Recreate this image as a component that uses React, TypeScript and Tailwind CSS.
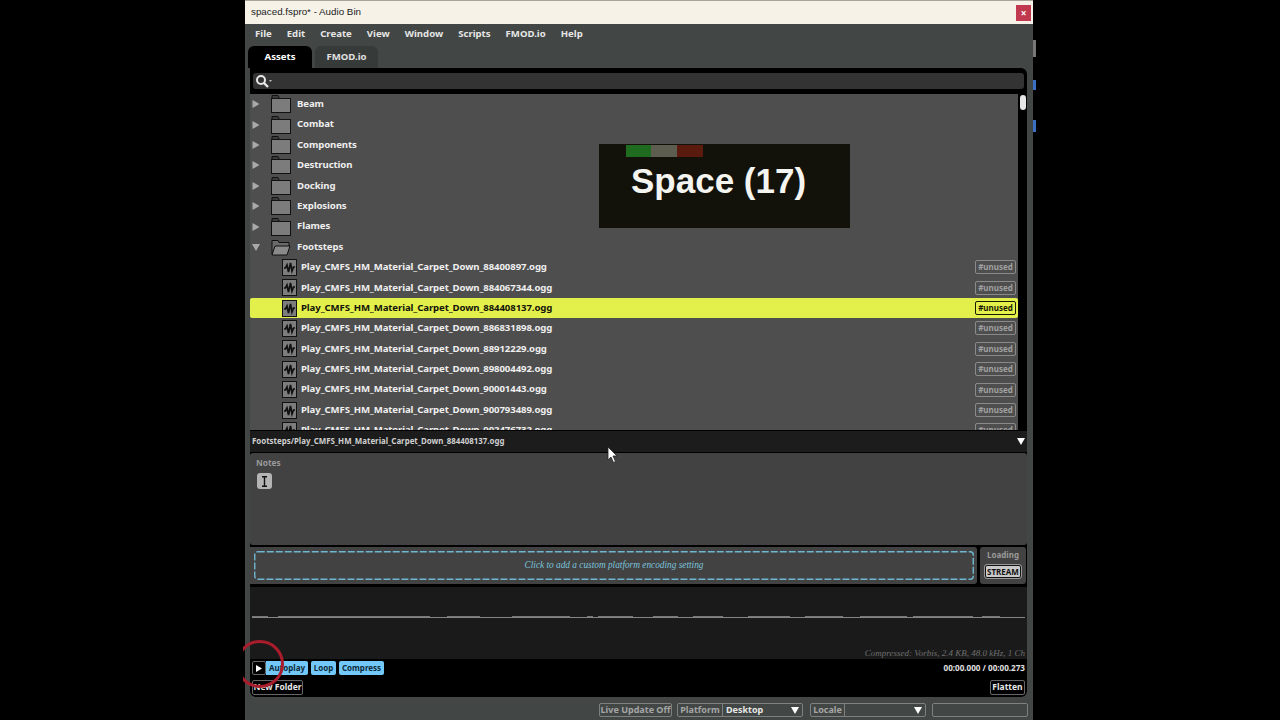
const folders = ["Beam", "Combat", "Components", "Destruction", "Docking", "Explosions", "Flames"]
const files = [
    "Play_CMFS_HM_Material_Carpet_Down_88400897.ogg",
    "Play_CMFS_HM_Material_Carpet_Down_884067344.ogg",
    "Play_CMFS_HM_Material_Carpet_Down_884408137.ogg",
    "Play_CMFS_HM_Material_Carpet_Down_886831898.ogg",
    "Play_CMFS_HM_Material_Carpet_Down_88912229.ogg",
    "Play_CMFS_HM_Material_Carpet_Down_898004492.ogg",
    "Play_CMFS_HM_Material_Carpet_Down_90001443.ogg",
    "Play_CMFS_HM_Material_Carpet_Down_900793489.ogg",
    "Play_CMFS_HM_Material_Carpet_Down_902476732.ogg",
]
const menu = ["File", "Edit", "Create", "View", "Window", "Scripts", "FMOD.io", "Help"]

// louder runs of the flat waveform, x start / x end
const waveRuns = [[2, 18], [28, 180], [197, 207], [207, 230], [262, 320], [337, 343], [348, 383], [403, 428], [443, 473], [498, 540], [555, 593], [610, 657], [663, 723], [732, 750]]

const Triangle = ({ open }: { open?: boolean }) => (
    <svg width="10" height="10" viewBox="0 0 10 10" className="shrink-0">
        {open ? <path d="M1 2h8L5 9z" fill="#a9a9a9" /> : <path d="M1.5 1l7 4-7 4z" fill="#a9a9a9" />}
    </svg>
)

const FolderIcon = ({ open }: { open?: boolean }) => (
    <svg width="20" height="18" viewBox="0 0 20 18" className="shrink-0">
        {open ? (
            <>
                <path d="M1 16V2.5h6l1 2h10v4H5z" fill="#6a6a6a" stroke="#111" strokeWidth="1" />
                <path d="M1 17l3-9h15l-3 9z" fill="#8a8a8a" stroke="#111" strokeWidth="1" />
            </>
        ) : (
            <>
                <path d="M1 3.5V.5h6l1.5 3z" fill="#3c3c3c" stroke="#111" strokeWidth="1" />
                <rect x="0.5" y="3.5" width="19" height="14" fill="#7c7c7c" stroke="#111" strokeWidth="1" />
            </>
        )}
    </svg>
)

const WaveIcon = () => (
    <svg width="15" height="17" viewBox="0 0 15 17" className="shrink-0">
        <rect x="0.5" y="0.5" width="14" height="16" fill="#7d7d7d" stroke="#111" strokeWidth="1" />
        <path d="M2 9h1.5l1.5-3 1.5 7 2-9 1.5 8 1.5-4H13" fill="none" stroke="#111" strokeWidth="1.7" />
    </svg>
)

const Tag = ({ active }: { active?: boolean }) => (
    <div className={`w-[41px] h-[14px] mr-[2px] rounded-[2px] border flex items-center justify-center text-[8px] font-bold tracking-normal ${active ? "border-[#1a1a00] text-[#1a1a00]" : "border-[#8a8a8a] text-[#a0a0a0]"}`}>
        #unused
    </div>
)

const App = () => {
    return (
        <div className="relative w-[1280px] h-[720px] bg-black overflow-hidden font-['Noto_Sans',sans-serif]">
            <div className="ml-[245px] w-[788px] h-[720px] bg-[#424745] flex flex-col">
                {/* Title bar */}
                <div className="h-[24px] shrink-0 bg-[#f6f2e8] border-t border-[#a8a498] flex items-center justify-between pl-[6px] pr-[2px]">
                    <span className="font-['Liberation_Sans',sans-serif] text-[9.8px] text-[#222]">spaced.fspro* - Audio Bin</span>
                    <div className="w-[15px] h-[16px] bg-[#c0394f] flex items-center justify-center text-white text-[10px] font-bold leading-none">×</div>
                </div>

                {/* Menu */}
                <div className="h-[20px] shrink-0 flex items-center pl-[10px] gap-[15px] text-[9.6px] font-bold text-[#e6e6e6]">
                    {menu.map((m) => (
                        <span key={m}>{m}</span>
                    ))}
                </div>

                {/* Tabs */}
                <div className="h-[24px] shrink-0 flex items-end pl-[3px] gap-[3px] text-[9.6px] font-bold text-white">
                    <div className="w-[64px] h-[22px] pt-[1px] bg-black rounded-t-md flex items-center justify-center">Assets</div>
                    <div className="w-[63px] h-[22px] pt-[1px] bg-[#363a39] rounded-t-md flex items-center justify-center text-[#e0e0e0]">FMOD.io</div>
                </div>

                {/* Main panel */}
                <div className="ml-[5px] w-[777px] h-[629px] shrink-0 bg-black rounded-b-md rounded-tr-md flex flex-col overflow-hidden">
                    <div className="h-[26px] shrink-0 pt-[5px] pl-[3px] pr-[3px]">
                        <div className="h-[16px] bg-[#333333] rounded-[3px] flex items-center pl-[2px]">
                            <svg width="18" height="14" viewBox="0 0 18 14">
                                <circle cx="6" cy="6" r="4" fill="none" stroke="#e8e8e8" strokeWidth="2" />
                                <path d="M9 9l4 4" stroke="#e8e8e8" strokeWidth="2.4" />
                                <path d="M14 6h3l-1.5 2z" fill="#bbb" />
                            </svg>
                        </div>
                    </div>

                    {/* Asset list */}
                    <div className="h-[336px] shrink-0 flex">
                        <div className="w-[768px] bg-[#4e4e4e] overflow-hidden">
                            {folders.map((f) => (
                                <div key={f} className="h-[20.4px] flex items-center pl-[1px] text-[9.6px] tracking-[-0.1px] font-bold text-[#efefef]">
                                    <Triangle />
                                    <span className="ml-[10px]"><FolderIcon /></span>
                                    <span className="ml-[6px]">{f}</span>
                                </div>
                            ))}
                            <div className="h-[20.4px] flex items-center pl-[1px] text-[9.6px] tracking-[-0.1px] font-bold text-[#efefef]">
                                <Triangle open />
                                <span className="ml-[10px]"><FolderIcon open /></span>
                                <span className="ml-[6px]">Footsteps</span>
                            </div>
                            {files.map((f, i) => (
                                <div key={f} className={`h-[20.4px] flex items-center justify-between rounded-[2px] pl-[32px] text-[9.6px] tracking-[-0.1px] font-bold ${i === 2 ? "bg-[#e3ef4b] text-[#14140a]" : "text-[#efefef]"}`}>
                                    <div className="flex items-center">
                                        <WaveIcon />
                                        <span className="ml-[4px]">{f}</span>
                                    </div>
                                    <Tag active={i === 2} />
                                </div>
                            ))}
                        </div>
                        <div className="flex-1 pl-[2px] pr-[1px] pt-[1px]">
                            <div className="h-[15px] bg-[#e6e6e6] rounded-full" />
                        </div>
                    </div>

                    {/* Path bar */}
                    <div className="mt-[1px] h-[21px] shrink-0 bg-[#1c1c1c] flex items-center justify-between pl-[2px] pr-[2px] text-[7.9px] font-bold text-[#cfcfcf]">
                        <span>Footsteps/Play_CMFS_HM_Material_Carpet_Down_884408137.ogg</span>
                        <svg width="8" height="7" viewBox="0 0 8 7"><path d="M0 0h8L4 7z" fill="#fff" /></svg>
                    </div>

                    {/* Notes */}
                    <div className="mt-[1px] h-[92px] shrink-0 bg-[#424242] rounded-[3px] pl-[6px] pt-[4px]">
                        <div className="text-[8.3px] leading-[12px] font-bold text-[#9a9a9a]">Notes</div>
                        <div className="mt-[4px] ml-[1px] w-[15px] h-[16px] rounded-[3px] bg-[#b4b4b4] flex items-center justify-center">
                            <svg width="7" height="11" viewBox="0 0 7 11"><path d="M1 .75h5M1 10.25h5M3.5 1v9" stroke="#111" strokeWidth="1.4" fill="none" /></svg>
                        </div>
                    </div>

                    {/* Platform row */}
                    <div className="mt-[2px] h-[37px] shrink-0 flex gap-[3px]">
                        <div className="w-[727px] bg-[#424242] rounded-r-[3px] pt-[4px] pl-[4px]">
                            <div className="relative w-[720px] h-[29px] flex items-center justify-center font-['Liberation_Serif',serif] italic text-[9.3px] text-[#7cc3dc]">
                                <svg className="absolute inset-0" width="720" height="29" viewBox="0 0 720 29">
                                    <rect x="0.75" y="0.75" width="718.5" height="27.5" rx="3" fill="none" stroke="#6fb7d0" strokeWidth="1.4" strokeDasharray="7 2" />
                                </svg>
                                Click to add a custom platform encoding setting
                            </div>
                        </div>
                        <div className="w-[46px] bg-[#424242] rounded-[3px] flex flex-col items-center">
                            <div className="mt-[2px] text-[8px] leading-[12px] font-bold text-[#9a9a9a]">Loading</div>
                            <div className="mt-[4px] w-[36px] h-[13px] bg-[#c9c9c9] rounded-[2px] border border-[#111] outline outline-1 outline-[#999] flex items-center justify-center text-[8px] font-bold text-[#111]">STREAM</div>
                        </div>
                    </div>

                    {/* Waveform */}
                    <div className="mt-[3px] h-[72px] shrink-0 bg-[#1a1a1a] flex flex-col">
                        <div className="mt-[28px] h-[3px] shrink-0">
                            <svg width="777" height="3" viewBox="0 0 777 3">
                                <path d="M2 2.5H775" stroke="#858585" strokeWidth="1" fill="none" />
                                {waveRuns.map(([a, b]) => (
                                    <path key={a} d={`M${a} 1.5H${b}`} stroke="#787878" strokeWidth="1" fill="none" />
                                ))}
                            </svg>
                        </div>
                        <div className="mt-auto pr-[2px] leading-[12px] text-right font-['Liberation_Serif',serif] italic text-[9px] text-[#6e6e6e]">Compressed: Vorbis, 2.4 KB, 48.0 kHz, 1 Ch</div>
                    </div>

                    {/* Transport */}
                    <div className="flex-1 flex flex-col pl-[2px] pr-[2px]">
                        <div className="mt-[2px] h-[14px] flex items-center text-[8px] font-bold text-[#0c2b3c]">
                            <div className="w-[14px] h-[14px] rounded-[2px] border border-[#666] bg-black flex items-center justify-center">
                                <svg width="6" height="7" viewBox="0 0 6 7"><path d="M0 0l6 3.5L0 7z" fill="#fff" /></svg>
                            </div>
                            <div className="w-[42px] h-[14px] bg-[#72c8f8] rounded-r-[2px] flex items-center justify-center">Autoplay</div>
                            <div className="ml-[3px] w-[25px] h-[14px] bg-[#72c8f8] rounded-[2px] flex items-center justify-center">Loop</div>
                            <div className="ml-[3px] w-[45px] h-[14px] bg-[#72c8f8] rounded-[2px] flex items-center justify-center">Compress</div>
                            <span className="ml-auto font-bold text-[8.1px] text-[#e0e0e0]">00:00.000 / 00:00.273</span>
                        </div>
                        <div className="mt-[5px] flex justify-between">
                            <div className="w-[51px] h-[15px] rounded-[2px] border border-[#666] flex items-center justify-center whitespace-nowrap text-[8.5px] font-bold text-[#e8e8e8]">New Folder</div>
                            <div className="w-[35px] h-[15px] rounded-[2px] border border-[#666] flex items-center justify-center text-[8.5px] font-bold text-[#e8e8e8]">Flatten</div>
                        </div>
                    </div>
                </div>

                {/* Status bar */}
                <div className="flex-1 flex items-center pt-[3px] pl-[354px] text-[9px] font-bold">
                    <div className="w-[73px] h-[14px] whitespace-nowrap border border-[#7d8280] rounded-[2px] flex items-center justify-center text-[#a5a5a5]">Live Update Off</div>
                    <div className="ml-[5px] w-[126px] h-[14px] border border-[#7d8280] rounded-[2px] flex items-center">
                        <span className="w-[45px] text-center text-[#a5a5a5] border-r border-[#7d8280]">Platform</span>
                        <span className="ml-[3px] text-[#e6e6e6] flex-1">Desktop</span>
                        <svg width="8" height="7" viewBox="0 0 8 7" className="mr-[3px]"><path d="M0 0h8L4 7z" fill="#fff" /></svg>
                    </div>
                    <div className="ml-[7px] w-[116px] h-[14px] border border-[#7d8280] rounded-[2px] flex items-center">
                        <span className="w-[34px] text-center text-[#a5a5a5] border-r border-[#7d8280]">Locale</span>
                        <span className="flex-1" />
                        <svg width="8" height="7" viewBox="0 0 8 7" className="mr-[3px]"><path d="M0 0h8L4 7z" fill="#fff" /></svg>
                    </div>
                    <div className="ml-[6px] w-[96px] h-[14px] border border-[#7d8280] rounded-[2px]" />
                </div>
            </div>

            {/* Video overlay */}
            <div className="absolute left-[599px] top-[144px] w-[251px] h-[84px] bg-[#12120b]">
                <div className="ml-[27px] mt-[1px] flex h-[12px]">
                    <div className="w-[25px] bg-[#1f6b1f]" />
                    <div className="w-[26px] bg-[#5d5d50]" />
                    <div className="w-[26px] bg-[#5a1a0e]" />
                </div>
                <div className="ml-[32px] font-['Liberation_Sans',sans-serif] font-bold text-[35px] leading-[48px] text-[#f4f4f0]">Space (17)</div>
            </div>

            {/* Click marker, only shows from the window edge on, and cursor */}
            <div className="absolute left-[243px] top-[640px] w-[42px] h-[48px] overflow-hidden">
                <div className="-ml-[7px] w-[48px] h-[48px] rounded-full border-[3px] border-[#a81c2c]" />
            </div>
            <svg className="absolute left-[607px] top-[446px]" width="12" height="18" viewBox="0 0 12 18">
                <path d="M1 1v13l3-3 2.5 5.5 2-1L6 10h4z" fill="#fff" stroke="#222" strokeWidth="0.8" />
            </svg>

            {/* Sliver of the window behind */}
            <div className="absolute left-[1033px] top-[40px] w-[3px] h-[17px] bg-[#777]" />
            <div className="absolute left-[1033px] top-[80px] w-[3px] h-[10px] bg-[#3b6fc4]" />
            <div className="absolute left-[1033px] top-[120px] w-[3px] h-[12px] bg-[#3b6fc4]" />
        </div>
    )
}

export default App
